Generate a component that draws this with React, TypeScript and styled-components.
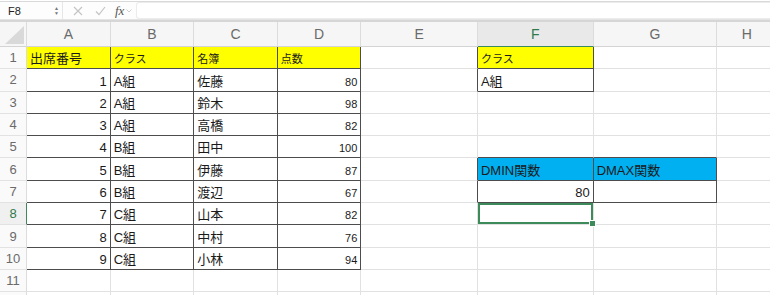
import React from "react";
import styled, { createGlobalStyle, css } from "styled-components";

const GlobalStyle = createGlobalStyle`
    html, body {
        margin: 0;
        padding: 0;
        background: #ffffff;
        overflow: hidden;
    }
    body {
        font-family: "Liberation Sans", "Noto Sans CJK JP", sans-serif;
    }
`;

const COLS = ["A", "B", "C", "D", "E", "F", "G", "H"];
const COL_WIDTHS = [27, 83.7, 83.6, 83.4, 83.6, 116.7, 115.7, 123.6, 60];
const ROW_COUNT = 11;
const SEL_COL = 6; // F
const SEL_ROW = 8;
const GREEN = "#3d8a5b";
const GRID = "#e1e1e1";
const DARK = "#4d4d4d";

type CellData = { text?: string; align?: "left" | "right"; small?: boolean; bg?: string };

const YELLOW = "#ffff00";
const BLUE = "#00b0f0";

const roster: [number, string, string, number][] = [
    [1, "A組", "佐藤", 80],
    [2, "A組", "鈴木", 98],
    [3, "A組", "高橋", 82],
    [4, "B組", "田中", 100],
    [5, "B組", "伊藤", 87],
    [6, "B組", "渡辺", 67],
    [7, "C組", "山本", 82],
    [8, "C組", "中村", 76],
    [9, "C組", "小林", 94],
];

const cells: Record<string, CellData> = {
    "1,1": { text: "出席番号", bg: YELLOW },
    "1,2": { text: "クラス", bg: YELLOW, small: true },
    "1,3": { text: "名簿", bg: YELLOW, small: true },
    "1,4": { text: "点数", bg: YELLOW, small: true },
    "1,6": { text: "クラス", bg: YELLOW, small: true },
    "2,6": { text: "A組" },
    "6,6": { text: "DMIN関数", bg: BLUE },
    "6,7": { text: "DMAX関数", bg: BLUE },
    "7,6": { text: "80", align: "right" },
};
roster.forEach(([no, cls, name, score], i) => {
    const r = i + 2;
    cells[`${r},1`] = { text: String(no), align: "right" };
    cells[`${r},2`] = { text: cls };
    cells[`${r},3`] = { text: name };
    cells[`${r},4`] = { text: String(score), align: "right", small: true };
});

// ranges with dark outlines: [r1, c1, r2, c2]
const boxes = [
    [1, 1, 10, 4],
    [1, 6, 2, 6],
    [6, 6, 7, 7],
];
const isDark = (r: number, c: number) =>
    boxes.some(([r1, c1, r2, c2]) => r >= r1 && r <= r2 && c >= c1 && c <= c2);

const Root = styled.div`
    width: 770px;
    height: 295px;
    display: flex;
    flex-direction: column;
    background: #fff;
    overflow: hidden;
`;

const FormulaBar = styled.div`
    height: 20px;
    margin-top: 1px;
    border-top: 1px solid #d9d9d9;
    border-bottom: 1px solid #e4e4e4;
    display: flex;
    align-items: center;
    background: #fdfdfd;
`;

const NameBox = styled.div`
    width: 63px;
    height: 100%;
    box-sizing: border-box;
    display: flex;
    align-items: center;
    justify-content: space-between;
    padding: 0 3px 0 8px;
    border-right: 1px solid #e6e6e6;
    font-size: 11px;
    color: #222;
`;

const Spinner = styled.div`
    display: flex;
    flex-direction: column;
    font-size: 5px;
    line-height: 5px;
    color: #777;
`;

const BarIcon = styled.span<{ $color: string; $left: number }>`
    margin-left: ${(p) => p.$left}px;
    color: ${(p) => p.$color};
    display: flex;
    align-items: center;
`;

const Fx = styled.span`
    margin-left: 9px;
    font-family: "Liberation Serif", serif;
    font-style: italic;
    font-size: 13px;
    color: #555;
`;

const FormulaInput = styled.div`
    flex: 1;
    height: 15px;
    margin-left: 4px;
    border: 1px solid #ececec;
    border-right: none;
    border-radius: 3px 0 0 3px;
    background: #fff;
`;

const Sheet = styled.div`
    flex: 1;
    display: grid;
    grid-template-columns: ${COL_WIDTHS.map((w) => `${w}px`).join(" ")};
    grid-template-rows: 25px repeat(${ROW_COUNT}, 22.3px) 1fr;
    border-top: 2px solid #d6d6d6;
`;

const ColHead = styled.div<{ $active?: boolean }>`
    box-sizing: border-box;
    display: flex;
    align-items: center;
    justify-content: center;
    font-size: 14px;
    color: ${(p) => (p.$active ? "#2f7a4c" : "#6a6a6a")};
    background: ${(p) => (p.$active ? "#e9e9e9" : "#f6f6f6")};
    border-right: 1px solid #dcdcdc;
    border-bottom: 1px solid ${(p) => (p.$active ? GREEN : "#d4d4d4")};
`;

const Corner = styled.div`
    position: relative;
    box-sizing: border-box;
    background: #f6f6f6;
    border-right: 1px solid #dcdcdc;
    border-bottom: 1px solid #d4d4d4;
    svg {
        position: absolute;
        right: 2px;
        bottom: 2px;
    }
`;

const RowHead = styled.div<{ $active?: boolean }>`
    box-sizing: border-box;
    display: flex;
    align-items: center;
    justify-content: center;
    font-size: 13px;
    color: ${(p) => (p.$active ? "#2f7a4c" : "#6a6a6a")};
    background: ${(p) => (p.$active ? "#f0f0f0" : "#fafafa")};
    border-right: 1px solid ${(p) => (p.$active ? GREEN : "#dcdcdc")};
    border-bottom: 1px solid #e2e2e2;
`;

const Cell = styled.div<{
    $bg?: string;
    $align?: "left" | "right";
    $small?: boolean;
    $rightDark?: boolean;
    $bottomDark?: boolean;
    $selected?: boolean;
}>`
    position: relative;
    box-sizing: border-box;
    display: flex;
    align-items: flex-end;
    justify-content: ${(p) => (p.$align === "right" ? "flex-end" : "flex-start")};
    padding: 0 3px 3px 3px;
    overflow: hidden;
    white-space: nowrap;
    font-size: ${(p) => (p.$small ? "11px" : "13px")};
    line-height: 1;
    color: #1a1a1a;
    background: ${(p) => p.$bg || "#fff"};
    border-right: 1px solid ${(p) => (p.$rightDark ? DARK : GRID)};
    border-bottom: 1px solid ${(p) => (p.$bottomDark ? DARK : GRID)};
    ${(p) =>
        p.$selected &&
        css`
            overflow: visible;
            box-shadow: inset 0 0 0 2px ${GREEN};
            &::after {
                content: "";
                position: absolute;
                right: -3px;
                bottom: -3px;
                width: 5px;
                height: 5px;
                background: ${GREEN};
                border: 1px solid #fff;
                z-index: 2;
            }
        `}
`;

export default function App() {
    const rows = [];
    for (let r = 1; r <= ROW_COUNT + 1; r++) {
        const filler = r > ROW_COUNT;
        rows.push(
            <RowHead key={`h${r}`} $active={r === SEL_ROW}>
                {filler ? null : r}
            </RowHead>
        );
        for (let c = 1; c <= COLS.length; c++) {
            const d = cells[`${r},${c}`] || {};
            rows.push(
                <Cell
                    key={`${r},${c}`}
                    $bg={d.bg}
                    $align={d.align}
                    $small={d.small}
                    $rightDark={isDark(r, c) || isDark(r, c + 1)}
                    $bottomDark={isDark(r, c) || isDark(r + 1, c)}
                    $selected={r === SEL_ROW && c === SEL_COL}
                >
                    {d.text}
                </Cell>
            );
        }
    }

    return (
        <Root>
            <GlobalStyle />
            <FormulaBar>
                <NameBox>
                    <span>F8</span>
                    <Spinner>
                        <span>▲</span>
                        <span>▼</span>
                    </Spinner>
                </NameBox>
                <BarIcon $color="#c4c4c4" $left={10}>
                    <svg width="10" height="10" viewBox="0 0 10 10">
                        <path d="M1 1 L9 9 M9 1 L1 9" stroke="currentColor" strokeWidth="1.2" />
                    </svg>
                </BarIcon>
                <BarIcon $color="#c4c4c4" $left={12}>
                    <svg width="11" height="10" viewBox="0 0 11 10">
                        <path d="M1 5.5 L4 8.5 L10 1" stroke="currentColor" strokeWidth="1.2" fill="none" />
                    </svg>
                </BarIcon>
                <Fx>fx</Fx>
                <BarIcon $color="#cfcfcf" $left={2}>
                    <svg width="6" height="4" viewBox="0 0 6 4">
                        <path d="M0.5 0.5 L3 3 L5.5 0.5" stroke="currentColor" fill="none" />
                    </svg>
                </BarIcon>
                <FormulaInput />
            </FormulaBar>
            <Sheet>
                <Corner>
                    <svg width="19" height="18" viewBox="0 0 19 18">
                        <path d="M19 0 L19 18 L0 18 Z" fill="#d9d9d9" />
                    </svg>
                </Corner>
                {COLS.map((c, i) => (
                    <ColHead key={c} $active={i + 1 === SEL_COL}>
                        {c}
                    </ColHead>
                ))}
                {rows}
            </Sheet>
        </Root>
    );
}
